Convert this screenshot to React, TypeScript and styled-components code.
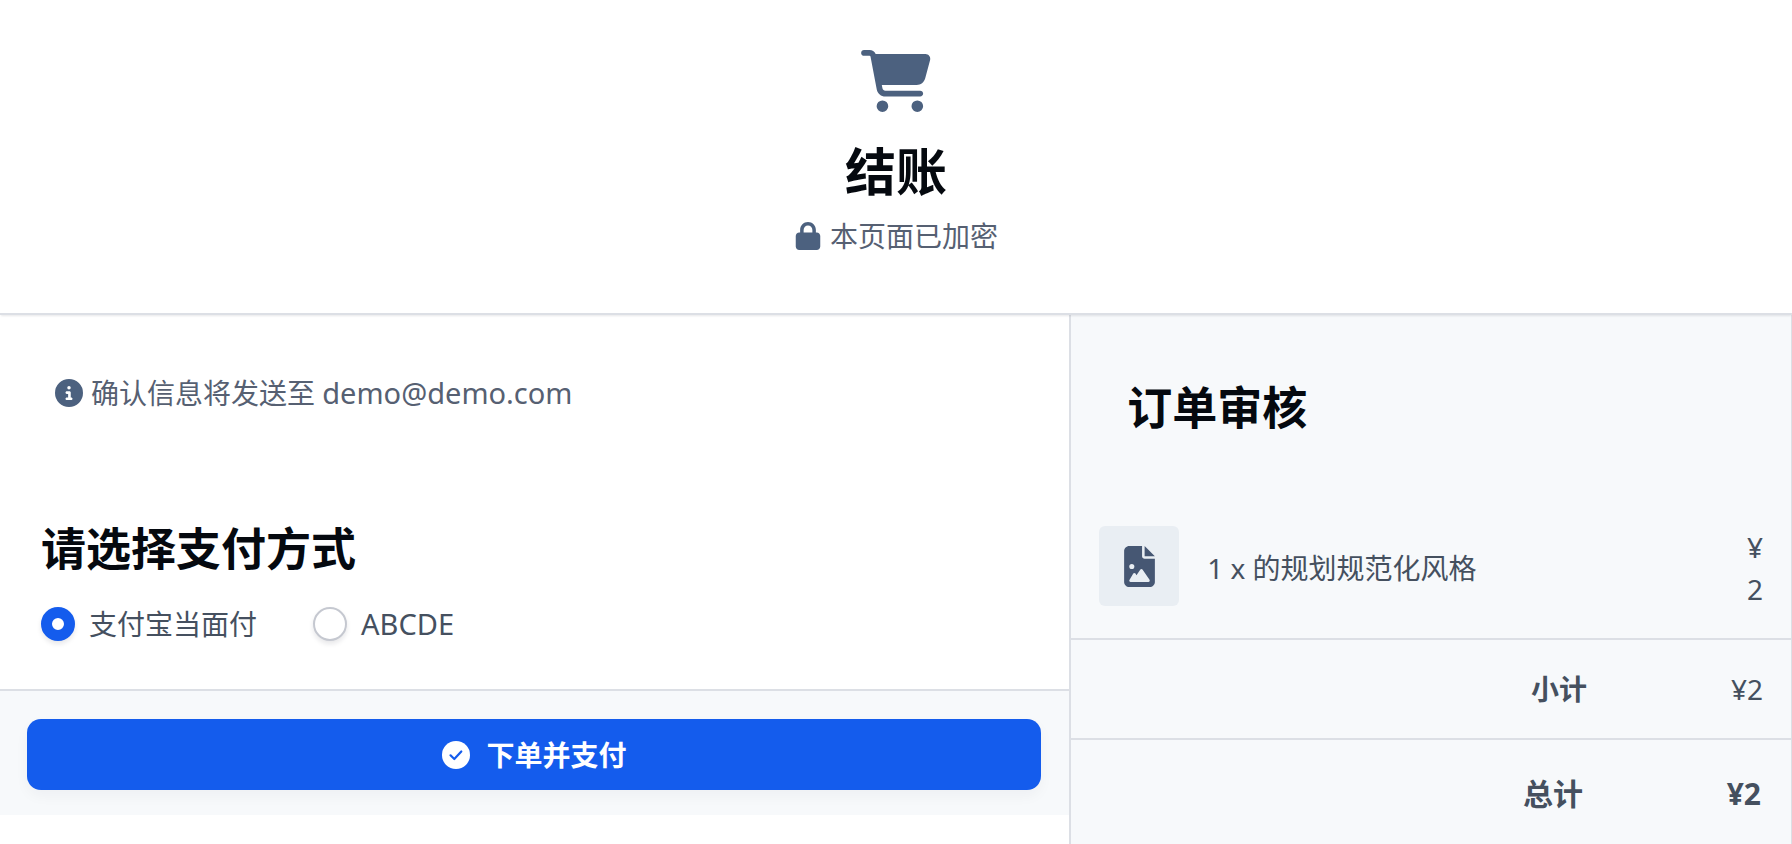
import { useState } from 'react';
import styled, { createGlobalStyle } from 'styled-components';
import { FaCircleInfo, FaFileImage, FaLock } from 'react-icons/fa6';

const color = {
  text: '#45505f',
  muted: '#566072',
  icon: '#4c617f',
  heading: '#05090f',
  line: '#dcdfe5',
  panel: '#f7f9fb',
  thumb: '#e9eef3',
  primary: '#145ced',
};

const GlobalStyle = createGlobalStyle`
  * { box-sizing: border-box; }
  body {
    margin: 0;
    background: #fff;
    color: ${color.text};
    font: 400 28px/42px 'Noto Sans', 'Noto Sans CJK SC', sans-serif;
  }
`;

const Page = styled.div`
  display: flex;
  flex-direction: column;
  min-height: 100vh;
`;

const Header = styled.header`
  position: relative;
  display: flex;
  flex-direction: column;
  align-items: center;
  padding: 50px 28px 56px;
  border-bottom: 2px solid ${color.line};
  box-shadow: 0 2px 2px -1px rgba(15, 23, 42, 0.1);
  color: ${color.icon};
`;

const CartIcon = styled.svg`
  width: 70px;
  height: 62px;
  fill: currentColor;
`;

const Title = styled.h1`
  margin: 29px 0 14px;
  color: ${color.heading};
  font-size: 51px;
  line-height: 60px;
  font-weight: 700;
`;

const IconLine = styled.p`
  display: flex;
  align-items: center;
  gap: 8px;
  margin: 0;
  color: ${color.muted};

  svg {
    flex: none;
    color: ${color.icon};
  }
`;

const Latin = styled.span`
  font-size: 29px;
`;

const Columns = styled.main`
  flex: 1;
  display: grid;
  grid-template-columns: 107fr 72fr;
`;

const Checkout = styled.form`
  min-width: 0;
  border-right: 2px solid ${color.line};
`;

const Notice = styled.div`
  padding: 57px 55px 65px;
`;

const SectionTitle = styled.h2`
  margin: 0;
  color: ${color.heading};
  font-size: 45px;
  line-height: 56px;
  font-weight: 700;
`;

const Methods = styled.fieldset`
  margin: 0;
  padding: 42px 41px 44px;
  border: 0;
`;

const Legend = styled.legend`
  float: left;
  width: 100%;
  margin-bottom: 26px;
  padding: 0;
`;

const Options = styled.div`
  clear: both;
  display: flex;
  flex-wrap: wrap;
  gap: 56px;
`;

const Option = styled.label`
  display: flex;
  align-items: center;
  gap: 14px;
  cursor: pointer;
`;

const Radio = styled.input`
  appearance: none;
  width: 34px;
  height: 34px;
  margin: 0;
  border: 2px solid #c5c8d0;
  border-radius: 50%;
  background: #fff;
  box-shadow: 0 3px 5px rgba(15, 23, 42, 0.1);

  &:checked {
    border: 11px solid ${color.primary};
  }
`;

const Actions = styled.div`
  padding: 28px 28px 25px 27px;
  border-top: 2px solid ${color.line};
  background: ${color.panel};
`;

const PayButton = styled.button`
  display: flex;
  align-items: center;
  justify-content: center;
  gap: 17px;
  width: 100%;
  min-height: 71px;
  padding: 14px;
  border: 0;
  border-radius: 14px;
  background: ${color.primary};
  box-shadow: 0 6px 14px rgba(15, 23, 42, 0.04);
  color: #fff;
  font: inherit;
  font-weight: 700;
  cursor: pointer;
`;

const Summary = styled.aside`
  min-width: 0;
  border-right: 1px solid ${color.line};
  background: ${color.panel};
`;

const SummaryHead = styled.div`
  padding: 65px 56px 62px;
`;

const Items = styled.ul`
  margin: 0;
  padding: 0;
  list-style: none;
`;

const Item = styled.li`
  display: flex;
  align-items: center;
  gap: 28px;
  padding: 28px;
  border-bottom: 2px solid ${color.line};
`;

const Thumb = styled.span`
  flex: none;
  align-self: flex-start;
  display: grid;
  place-items: center;
  width: 80px;
  height: 80px;
  border-radius: 6px;
  background: ${color.thumb};
  color: #465773;
`;

const ItemName = styled.span`
  flex: 1;
`;

const ItemPrice = styled.span`
  display: flex;
  flex-direction: column;
  text-align: right;
`;

const Totals = styled.table`
  width: 100%;
  table-layout: fixed;
  border-collapse: collapse;
`;

const TotalRow = styled.tr<{ $grand?: boolean }>`
  ${({ $grand }) => ($grand ? 'font-size: 30px; line-height: 52px; font-weight: 700;' : '')}

  & + & {
    border-top: 2px solid ${color.line};
  }

  th,
  td {
    padding: 28px ${({ $grand }) => ($grand ? 30 : 28)}px 28px 0;
    text-align: right;
  }

  th {
    width: 75%;
    padding-right: ${({ $grand }) => ($grand ? 28 : 24)}px;
    font-weight: 700;
  }
`;

const methods = [
  { name: '支付宝当面付', label: '支付宝当面付' },
  { name: 'ABCDE', label: <Latin>ABCDE</Latin> },
];

export default function App() {
  const [method, setMethod] = useState(methods[0].name);

  return (
    <>
      <GlobalStyle />
      <Page>
        <Header>
          <CartIcon viewBox="0 0 576 512" aria-hidden="true">
            <path d="M0 24C0 10.7 10.7 0 24 0H69.500c22 0 41.500 12.800 50.600 32h411c26.300 0 45.500 25 38.600 50.400l-41 152.300c-8.500 31.400-37 53.300-69.500 53.300H170.700l5.400 28.500c2.200 11.300 12.100 19.500 23.600 19.500H488c13.300 0 24 10.700 24 24s-10.700 24-24 24H199.700c-34.600 0-64.300-24.600-70.700-58.500L77.400 54.500c-.7-3.800-4-6.500-7.900-6.500H24C10.700 48 0 37.300 0 24zM128 464a48 48 0 1 1 96 0 48 48 0 1 1-96 0zm336-48a48 48 0 1 1 0 96 48 48 0 1 1 0-96z" />
          </CartIcon>
          <Title>结账</Title>
          <IconLine>
            <FaLock size={28} />
            本页面已加密
          </IconLine>
        </Header>
        <Columns>
          <Checkout onSubmit={(e) => e.preventDefault()}>
            <Notice>
              <IconLine>
                <FaCircleInfo size={28} />
                <span>
                  确认信息将发送至 <Latin>demo@demo.com</Latin>
                </span>
              </IconLine>
            </Notice>
            <Methods>
              <Legend>
                <SectionTitle>请选择支付方式</SectionTitle>
              </Legend>
              <Options>
                {methods.map(({ name, label }) => (
                  <Option key={name}>
                    <Radio
                      type="radio"
                      name="method"
                      value={name}
                      checked={method === name}
                      onChange={() => setMethod(name)}
                    />
                    {label}
                  </Option>
                ))}
              </Options>
            </Methods>
            <Actions>
              <PayButton type="submit">
                <svg width="28" height="28" viewBox="0 0 28 28" aria-hidden="true">
                  <circle cx="14" cy="14" r="14" fill="#fff" />
                  <path
                    d="M8.500 14.300l3.800 3.700 7-7.500"
                    fill="none"
                    stroke={color.primary}
                    strokeWidth="2.200"
                    strokeLinecap="round"
                    strokeLinejoin="round"
                  />
                </svg>
                下单并支付
              </PayButton>
            </Actions>
          </Checkout>
          <Summary>
            <SummaryHead>
              <SectionTitle>订单审核</SectionTitle>
            </SummaryHead>
            <Items>
              <Item>
                <Thumb>
                  <FaFileImage size={41} />
                </Thumb>
                <ItemName>1 x 的规划规范化风格</ItemName>
                <ItemPrice>
                  <span>¥</span>
                  <span>2</span>
                </ItemPrice>
              </Item>
            </Items>
            <Totals>
              <tbody>
                <TotalRow>
                  <th scope="row">小计</th>
                  <td>¥2</td>
                </TotalRow>
                <TotalRow $grand>
                  <th scope="row">总计</th>
                  <td>¥2</td>
                </TotalRow>
              </tbody>
            </Totals>
          </Summary>
        </Columns>
      </Page>
    </>
  );
}
